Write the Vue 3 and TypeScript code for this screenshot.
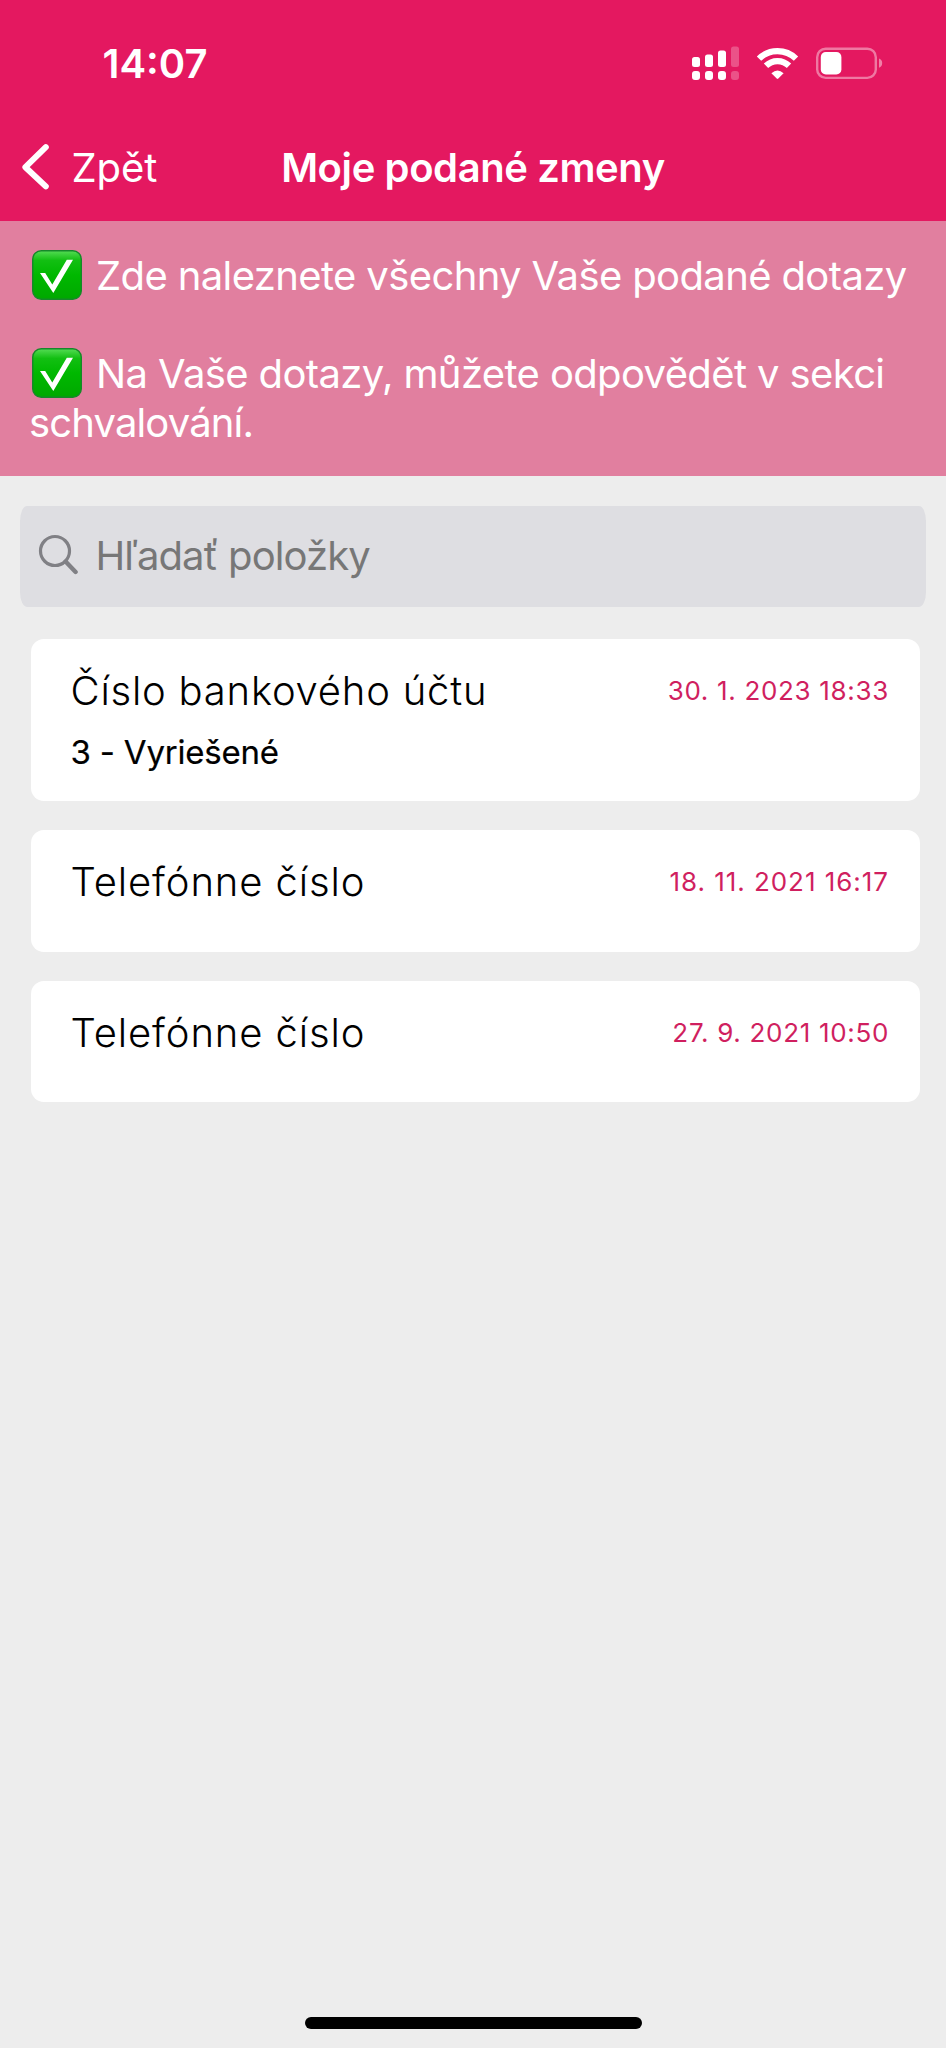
<script setup lang="ts">
interface Change {
  title: string
  date: string
  status?: string
}

const changes: Change[] = [
  { title: 'Číslo bankového účtu', date: '30. 1. 2023 18:33', status: '3 - Vyriešené' },
  { title: 'Telefónne číslo', date: '18. 11. 2021 16:17' },
  { title: 'Telefónne číslo', date: '27. 9. 2021 10:50' },
]
</script>

<template>
  <div class="screen">
    <header class="header">
      <div class="status-bar">
        <span class="clock">14:07</span>
        <svg class="status-icons" width="192" height="36" viewBox="0 0 192 36">
          <g fill="#fff">
            <rect x="0" y="12" width="8" height="10" rx="2.5" />
            <rect x="13" y="9.5" width="8" height="12.5" rx="2.5" />
            <rect x="26" y="5.5" width="8" height="16.5" rx="2.5" />
            <rect x="39" y="1.5" width="8" height="20.5" rx="2.5" opacity="0.25" />
            <rect x="0" y="26" width="8" height="9" rx="3" />
            <rect x="13" y="26" width="8" height="9" rx="3" />
            <rect x="26" y="26" width="8" height="9" rx="3" />
            <rect x="39" y="26" width="8" height="9" rx="3" opacity="0.25" />
          </g>
          <g fill="none" stroke="#fff" stroke-width="6.2">
            <path d="M67 13.6 A26.5 26.5 0 0 1 104 13.6" />
            <path d="M74 20.8 A16.4 16.4 0 0 1 97 20.8" />
          </g>
          <path d="M79.4 28.2 Q85.5 22.8 91.6 28.2 L86.3 33.6 Q85.5 34.4 84.7 33.6 Z" fill="#fff" />
          <rect x="125.2" y="3.7" width="58.6" height="29.2" rx="8.5" fill="none" stroke="#fff" stroke-opacity="0.42" stroke-width="2.4" />
          <rect x="128.8" y="7.1" width="20.6" height="22.4" rx="5" fill="#fff" />
          <path d="M187 13.5 Q190.2 14.5 190.2 18.1 Q190.2 21.7 187 22.7 Z" fill="#fff" opacity="0.45" />
        </svg>
      </div>
      <nav class="nav-bar">
        <a class="back">
          <svg width="30" height="48" viewBox="0 0 30 48">
            <path d="M25.8 4.2 L5.4 24.2 L25.8 43.4" fill="none" stroke="#fff" stroke-width="6" stroke-linecap="round" stroke-linejoin="round" />
          </svg>
          <span>Zpět</span>
        </a>
        <h1 class="title">Moje podané zmeny</h1>
      </nav>
    </header>

    <section class="banner">
      <svg class="defs" width="0" height="0">
        <linearGradient id="tile" x1="0" y1="0" x2="0" y2="1">
          <stop offset="0" stop-color="#55dc55" />
          <stop offset="0.2" stop-color="#12bf12" />
          <stop offset="0.5" stop-color="#00b800" />
          <stop offset="1" stop-color="#00a800" />
        </linearGradient>
      </svg>
      <p class="note"><svg class="check" viewBox="0 0 50 50"><rect x="0.7" y="0.7" width="48.6" height="48.6" rx="8.5" fill="url(#tile)" stroke="#16882a" stroke-width="1.4" /><path d="M8 23 H13.2 L20.3 34.6 L34.8 9.8 H41 L21.3 43 Z" fill="#fff" /></svg>Zde naleznete všechny Vaše podané dotazy</p>
      <p class="note second"><svg class="check" viewBox="0 0 50 50"><rect x="0.7" y="0.7" width="48.6" height="48.6" rx="8.5" fill="url(#tile)" stroke="#16882a" stroke-width="1.4" /><path d="M8 23 H13.2 L20.3 34.6 L34.8 9.8 H41 L21.3 43 Z" fill="#fff" /></svg>Na Vaše dotazy, můžete odpovědět v sekci <span class="tail">schvalování.</span></p>
    </section>

    <div class="search">
      <svg width="42" height="42" viewBox="0 0 42 42" fill="none" stroke="#808085">
        <circle cx="18" cy="18" r="14.5" stroke-width="3.2" />
        <path d="M28.6 28.6 L38.6 39" stroke-width="4.4" stroke-linecap="round" />
      </svg>
      <span>Hľadať položky</span>
    </div>

    <ul class="list">
      <li v-for="(item, i) in changes" :key="i" class="card">
        <div class="row">
          <span class="name">{{ item.title }}</span>
          <time class="date">{{ item.date }}</time>
        </div>
        <div v-if="item.status" class="state">{{ item.status }}</div>
      </li>
    </ul>

    <div class="home-indicator"></div>
  </div>
</template>

<style>
body {
  background: #ededed;
}
</style>

<style scoped>
.screen {
  display: flex;
  flex-direction: column;
  box-sizing: border-box;
  width: 946px;
  height: 2048px;
  background: #ededed;
  font-family: Inter, "Liberation Sans", sans-serif;
  font-size: 40px;
  line-height: 49px;
  color: #000;
}

.header {
  box-sizing: border-box;
  height: 221px;
  background: #e41860;
  color: #fff;
}

.status-bar {
  display: flex;
  align-items: center;
  justify-content: space-between;
  height: 126px;
  padding: 0 62px 0 102.5px;
}

.clock {
  font-weight: 600;
}

.status-icons {
  display: block;
  margin-top: -1px;
}

.nav-bar {
  display: grid;
  grid-template-columns: 1fr auto 1fr;
  align-items: center;
  height: 82px;
  padding-left: 20px;
}

.back {
  display: flex;
  align-items: center;
  gap: 21.5px;
  letter-spacing: -0.1px;
}

.back svg {
  display: block;
}

.title {
  margin: 0;
  font-size: 40px;
  font-weight: 600;
  letter-spacing: -0.4px;
  transform: translateX(-10px);
}

.banner {
  box-sizing: border-box;
  height: 255px;
  padding: 30px 29px 0;
  background: #e17f9f;
  color: #fff;
}

.defs {
  position: absolute;
}

.note {
  margin: 0;
  letter-spacing: -0.62px;
}

.second {
  margin-top: 49px;
  letter-spacing: -0.62px;
}

.tail {
  letter-spacing: -0.85px;
}

.check {
  width: 50px;
  height: 50px;
  margin: -1px 14.5px 0 2.5px;
  vertical-align: -10px;
}

.search {
  display: flex;
  align-items: center;
  gap: 16.5px;
  box-sizing: border-box;
  height: 101px;
  margin: 30px 20px 0;
  padding: 0 17px 2px;
  border-radius: 7px / 15px;
  background: #dedee2;
  color: #777;
  letter-spacing: -0.92px;
}

.search svg {
  display: block;
  margin-top: -3px;
}

.list {
  display: flex;
  flex-direction: column;
  gap: 29px;
  margin: 32px 26.5px 0 31px;
  padding: 0;
  list-style: none;
}

.card {
  box-sizing: border-box;
  min-height: 121.5px;
  padding: 27px 30.5px 29.5px 39.5px;
  border-radius: 13px;
  background: #fff;
}

.row {
  display: flex;
  align-items: center;
  justify-content: space-between;
}

.name {
  font-weight: 300;
  letter-spacing: 0.9px;
}

.card:first-child .name {
  letter-spacing: 0.78px;
}

.date {
  font-size: 26px;
  letter-spacing: 0.68px;
  color: #d01f5f;
}

.card:nth-child(2) .date {
  letter-spacing: 0.96px;
}

.state {
  margin-top: 16.5px;
  font-size: 33px;
  font-weight: 400;
  line-height: 40px;
  letter-spacing: -0.2px;
  -webkit-text-stroke: 0.2px #000;
}

.home-indicator {
  width: 337px;
  height: 12px;
  margin: auto auto 19.5px;
  border-radius: 6px;
  background: #000;
}
</style>
